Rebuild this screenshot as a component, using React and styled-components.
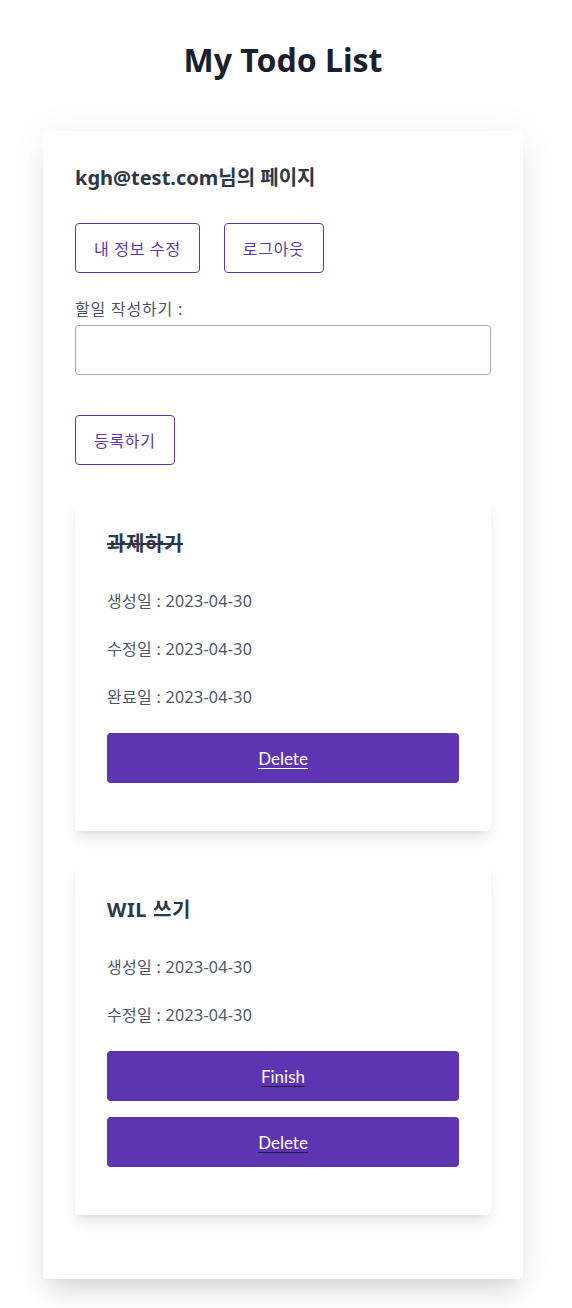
import React from "react";
import styled, { createGlobalStyle } from "styled-components";

const GlobalStyle = createGlobalStyle`
  body {
    margin: 0;
    background: #fff;
    font-family: "Noto Sans", "Noto Sans CJK KR", sans-serif;
  }
`;

const Page = styled.div`
  display: flex;
  flex-direction: column;
  align-items: center;
  padding: 38px 6px 30px 0;
`;

const Title = styled.h1`
  margin: 0 0 49px;
  font-size: 32px;
  line-height: 44px;
  font-weight: 700;
  color: #1a202c;
`;

const Board = styled.div`
  box-sizing: border-box;
  width: 480px;
  padding: 32px;
  background: #fff;
  border-radius: 4px;
  box-shadow: 0 20px 25px -5px rgba(0, 0, 0, 0.1),
    0 10px 10px -5px rgba(0, 0, 0, 0.04), 0 0 40px rgba(0, 0, 0, 0.05);
`;

const UserTitle = styled.h2`
  margin: 0 0 30px;
  font-size: 20px;
  line-height: 30px;
  font-weight: 700;
  color: #2d3748;
`;

const ButtonRow = styled.div`
  display: flex;
  gap: 24px;
  margin-bottom: 26px;
`;

const OutlineButton = styled.button`
  height: 50px;
  padding: 0 18px;
  background: #fff;
  border: 1px solid #5e35b1;
  border-radius: 4px;
  color: #5e35b1;
  font-family: inherit;
  font-size: 16px;
  letter-spacing: 0.7px;
  cursor: pointer;
`;

const Label = styled.label`
  display: block;
  font-size: 16px;
  line-height: 20px;
  letter-spacing: 0.8px;
  color: #4a5568;
  margin-bottom: 6px;
`;

const Input = styled.input`
  box-sizing: border-box;
  display: block;
  width: 100%;
  height: 50px;
  border: 1px solid #a0aec0;
  border-radius: 4px;
  margin-bottom: 40px;
  padding: 0 12px;
  font-size: 16px;
`;

const SubmitRow = styled.div`
  margin-bottom: 32px;
`;

const TodoCard = styled.div`
  padding: 32px;
  margin-bottom: 32px;
  background: #fff;
  border-radius: 4px;
  box-shadow: 0 10px 15px -3px rgba(0, 0, 0, 0.1),
    0 4px 6px -2px rgba(0, 0, 0, 0.05);
`;

const TodoTitle = styled.h3`
  margin: 0 0 30px;
  font-size: 20px;
  line-height: 30px;
  font-weight: 700;
  letter-spacing: 0.6px;
  color: #2d3748;
  text-decoration: ${(p) => (p.$done ? "line-through" : "none")};
`;

const DateLine = styled.p`
  margin: 0 0 24px;
  font-size: 16px;
  line-height: 24px;
  letter-spacing: 0.3px;
  color: #4a5568;
`;

const SolidButton = styled.button`
  display: block;
  width: 100%;
  height: 50px;
  margin-bottom: 16px;
  background: #5e35b1;
  border: none;
  border-radius: 4px;
  color: #fff;
  font-family: Lato, "Noto Sans", sans-serif;
  font-size: 17px;
  text-decoration: underline;
  text-decoration-color: ${(p) => (p.$lightLine ? "#fff" : "#1e1b4b")};
  text-underline-offset: 3px;
  cursor: pointer;
`;

const todos = [
  {
    id: 1,
    title: "과제하기",
    done: true,
    created: "2023-04-30",
    updated: "2023-04-30",
    finished: "2023-04-30",
  },
  {
    id: 2,
    title: "WIL 쓰기",
    done: false,
    created: "2023-04-30",
    updated: "2023-04-30",
  },
];

export default function App() {
  return (
    <>
      <GlobalStyle />
      <Page>
        <Title>My Todo List</Title>
        <Board>
          <UserTitle>kgh@test.com님의 페이지</UserTitle>
          <ButtonRow>
            <OutlineButton>내 정보 수정</OutlineButton>
            <OutlineButton>로그아웃</OutlineButton>
          </ButtonRow>
          <Label htmlFor="todo">할일 작성하기 :</Label>
          <Input id="todo" />
          <SubmitRow>
            <OutlineButton>등록하기</OutlineButton>
          </SubmitRow>
          {todos.map((t) => (
            <TodoCard key={t.id}>
              <TodoTitle $done={t.done}>{t.title}</TodoTitle>
              <DateLine>생성일 : {t.created}</DateLine>
              <DateLine>수정일 : {t.updated}</DateLine>
              {t.finished && <DateLine>완료일 : {t.finished}</DateLine>}
              {!t.done && <SolidButton>Finish</SolidButton>}
              <SolidButton $lightLine={t.done}>Delete</SolidButton>
            </TodoCard>
          ))}
        </Board>
      </Page>
    </>
  );
}
